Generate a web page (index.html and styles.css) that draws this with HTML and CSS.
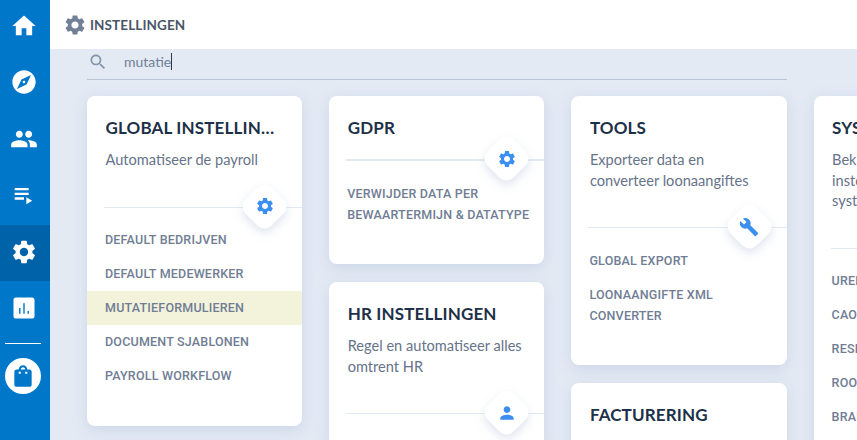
FILE: index.html
```html
<!DOCTYPE html>
<html lang="nl">
<head>
    <meta charset="UTF-8">
    <meta name="viewport" content="width=device-width, initial-scale=1.0">
    <title>Instellingen</title>
    <link rel="stylesheet" href="styles.css">
</head>
<body>
    <svg class="sprite" aria-hidden="true">
        <symbol id="i-home" viewBox="0 0 24 24"><path d="M10 20v-6h4v6h5v-8h3L12 3 2 12h3v8z"/></symbol>
        <symbol id="i-explore" viewBox="0 0 24 24"><path d="M12 10.9c-.61 0-1.1.49-1.1 1.1s.49 1.1 1.1 1.1c.61 0 1.1-.49 1.1-1.1s-.49-1.1-1.1-1.1zM12 2C6.48 2 2 6.48 2 12s4.48 10 10 10 10-4.48 10-10S17.52 2 12 2zm2.19 12.19L6 18l3.81-8.19L18 6l-3.81 8.19z"/></symbol>
        <symbol id="i-people" viewBox="0 0 24 24"><path d="M16 11c1.66 0 2.99-1.34 2.99-3S17.66 5 16 5c-1.66 0-3 1.34-3 3s1.34 3 3 3zm-8 0c1.66 0 2.99-1.34 2.99-3S9.66 5 8 5C6.34 5 5 6.34 5 8s1.34 3 3 3zm0 2c-2.33 0-7 1.17-7 3.5V19h14v-2.5c0-2.33-4.67-3.5-7-3.5zm8 0c-.29 0-.62.02-.97.05 1.16.84 1.97 1.97 1.97 3.45V19h6v-2.5c0-2.33-4.67-3.5-7-3.5z"/></symbol>
        <symbol id="i-playlist" viewBox="0 0 24 24"><path d="M4 10h12v2H4zm0-4h12v2H4zm0 8h8v2H4zm10 0v6l5-3z"/></symbol>
        <symbol id="i-settings" viewBox="0 0 24 24"><path d="M19.14 12.94c.04-.3.06-.61.06-.94 0-.32-.02-.64-.07-.94l2.03-1.58c.18-.14.23-.41.12-.61l-1.92-3.32c-.12-.22-.37-.29-.59-.22l-2.39.96c-.5-.38-1.03-.7-1.62-.94l-.36-2.54c-.04-.24-.24-.41-.48-.41h-3.84c-.24 0-.43.17-.47.41l-.36 2.54c-.59.24-1.13.57-1.62.94l-2.39-.96c-.22-.08-.47 0-.59.22L2.74 8.87c-.12.21-.08.47.12.61l2.03 1.58c-.05.3-.09.63-.09.94s.02.64.07.94l-2.03 1.58c-.18.14-.23.41-.12.61l1.92 3.32c.12.22.37.29.59.22l2.39-.96c.5.38 1.03.7 1.62.94l.36 2.54c.05.24.24.41.48.41h3.84c.24 0 .44-.17.47-.41l.36-2.54c.59-.24 1.13-.56 1.62-.94l2.39.96c.22.08.47 0 .59-.22l1.92-3.32c.12-.22.07-.47-.12-.61l-2.01-1.58zM12 15.6c-1.98 0-3.6-1.62-3.6-3.6s1.62-3.6 3.6-3.6 3.6 1.62 3.6 3.6-1.62 3.6-3.6 3.6z"/></symbol>
        <symbol id="i-chart" viewBox="0 0 24 24"><path fill-rule="evenodd" d="M19 3H5c-1.1 0-2 .9-2 2v14c0 1.1.9 2 2 2h14c1.1 0 2-.9 2-2V5c0-1.1-.9-2-2-2zM9 17H7.8v-5H9zm3.6 0h-1.2V8h1.2zm3.6 0H15v-2.4h1.2z"/></symbol>
        <symbol id="i-bag" viewBox="0 0 24 24"><path fill-rule="evenodd" d="M18 6h-2c0-2.21-1.79-4-4-4S8 3.79 8 6H6c-1.1 0-2 .9-2 2v12c0 1.1.9 2 2 2h12c1.1 0 2-.9 2-2V8c0-1.1-.9-2-2-2zm-6-2c1.1 0 2 .9 2 2h-4c0-1.1.9-2 2-2zM8 8h2v2H8zm6 0h2v2h-2z"/></symbol>
        <symbol id="i-wrench" viewBox="0 0 24 24"><path d="M22.7 19l-9.1-9.1c.9-2.3.4-5-1.5-6.9-2-2-5-2.4-7.4-1.3L9 6 6 9 1.6 4.7C.4 7.1.9 10.1 2.9 12.1c1.9 1.9 4.6 2.4 6.9 1.5l9.1 9.1c.4.4 1 .4 1.4 0l2.3-2.3c.5-.4.5-1.1.1-1.4z"/></symbol>
        <symbol id="i-person" viewBox="0 0 24 24"><path d="M12 12c2.21 0 4-1.79 4-4s-1.79-4-4-4-4 1.79-4 4 1.79 4 4 4zm0 2c-2.67 0-8 1.34-8 4v2h16v-2c0-2.66-5.33-4-8-4z"/></symbol>
        <symbol id="i-search" viewBox="0 0 24 24"><path d="M15.5 14h-.79l-.28-.27C15.41 12.59 16 11.11 16 9.5 16 5.91 13.09 3 9.5 3S3 5.91 3 9.5 5.91 16 9.5 16c1.61 0 3.09-.59 4.23-1.57l.27.28v.79l5 4.99L20.49 19l-4.99-5zm-6 0C7.01 14 5 11.99 5 9.5S7.01 5 9.5 5 14 7.01 14 9.5 11.99 14 9.5 14z"/></symbol>
    </svg>

    <nav class="sidebar">
        <a class="nav-item"><svg class="nav-icon"><use href="#i-home"/></svg></a>
        <a class="nav-item"><svg class="nav-icon"><use href="#i-explore"/></svg></a>
        <a class="nav-item"><svg class="nav-icon"><use href="#i-people"/></svg></a>
        <a class="nav-item"><svg class="nav-icon"><use href="#i-playlist"/></svg></a>
        <a class="nav-item active"><svg class="nav-icon"><use href="#i-settings"/></svg></a>
        <a class="nav-item"><svg class="nav-icon"><use href="#i-chart"/></svg></a>
        <div class="nav-divider"></div>
        <a class="nav-shop"><svg class="shop-icon"><use href="#i-bag"/></svg></a>
    </nav>

    <div class="page">
        <header class="header">
            <svg class="header-icon"><use href="#i-settings"/></svg>
            <span class="header-title">INSTELLINGEN</span>
        </header>

        <main class="content">
            <div class="search">
                <svg class="search-icon"><use href="#i-search"/></svg>
                <span class="search-text">mutatie</span><span class="caret"></span>
            </div>

            <div class="columns">
                <div class="column">
                    <section class="card">
                        <h3 class="card-title">GLOBAL INSTELLINGEN</h3>
                        <p class="card-description">Automatiseer de payroll</p>
                        <div class="card-divider">
                            <span class="diamond"><svg class="diamond-icon"><use href="#i-settings"/></svg></span>
                        </div>
                        <ul class="card-links">
                            <li>DEFAULT BEDRIJVEN</li>
                            <li>DEFAULT MEDEWERKER</li>
                            <li class="match">MUTATIEFORMULIEREN</li>
                            <li>DOCUMENT SJABLONEN</li>
                            <li>PAYROLL WORKFLOW</li>
                        </ul>
                    </section>
                </div>

                <div class="column">
                    <section class="card">
                        <h3 class="card-title">GDPR</h3>
                        <div class="card-divider thick">
                            <span class="diamond"><svg class="diamond-icon"><use href="#i-settings"/></svg></span>
                        </div>
                        <ul class="card-links">
                            <li>VERWIJDER DATA PER BEWAARTERMIJN &amp; DATATYPE</li>
                        </ul>
                    </section>
                    <section class="card">
                        <h3 class="card-title">HR INSTELLINGEN</h3>
                        <p class="card-description">Regel en automatiseer alles omtrent HR</p>
                        <div class="card-divider">
                            <span class="diamond"><svg class="diamond-icon"><use href="#i-person"/></svg></span>
                        </div>
                    </section>
                </div>

                <div class="column">
                    <section class="card">
                        <h3 class="card-title">TOOLS</h3>
                        <p class="card-description">Exporteer data en converteer loonaangiftes</p>
                        <div class="card-divider">
                            <span class="diamond"><svg class="diamond-icon"><use href="#i-wrench"/></svg></span>
                        </div>
                        <ul class="card-links">
                            <li>GLOBAL EXPORT</li>
                            <li>LOONAANGIFTE XML CONVERTER</li>
                        </ul>
                    </section>
                    <section class="card">
                        <h3 class="card-title">FACTURERING</h3>
                    </section>
                </div>

                <div class="column">
                    <section class="card">
                        <h3 class="card-title">SYSTEEM</h3>
                        <p class="card-description">Bekijk en wijzig alle instellingen van het hele systeem</p>
                        <div class="card-divider"></div>
                        <ul class="card-links">
                            <li>UREN</li>
                            <li>CAO</li>
                            <li>RESET</li>
                            <li>ROOSTERS</li>
                            <li>BRANCHES</li>
                        </ul>
                    </section>
                </div>
            </div>
        </main>
    </div>
</body>
</html>
```

FILE: styles.css
```css
* {
    margin: 0;
    padding: 0;
    box-sizing: border-box;
}

html, body {
    height: 100%;
    overflow: hidden;
}

body {
    font-family: 'Lato', 'Noto Sans', sans-serif;
    background: #e3eaf4;
    display: flex;
}

.sprite {
    display: none;
}

/* Sidebar */
.sidebar {
    width: 50px;
    flex-shrink: 0;
    background: #0077c8;
    display: flex;
    flex-direction: column;
    align-items: stretch;
    fill: #fff;
}

.nav-item {
    height: 56.3px;
    display: flex;
    align-items: center;
    justify-content: center;
    padding-right: 3px;
    padding-bottom: 4px;
}

.nav-item.active {
    background: #0062a8;
    padding-bottom: 2px;
}

.nav-icon {
    width: 28px;
    height: 28px;
}

.nav-divider {
    height: 1px;
    margin: 5px 9px 0 5px;
    background: #fff;
}

.nav-shop {
    width: 36px;
    height: 36px;
    margin: 14px 0 0 5px;
    border-radius: 50%;
    background: #fff;
    display: flex;
    align-items: center;
    justify-content: center;
}

.shop-icon {
    width: 26px;
    height: 26px;
    fill: #0077c8;
}

/* Header */
.page {
    flex: 1;
    min-width: 0;
    display: flex;
    flex-direction: column;
}

.header {
    height: 49px;
    flex-shrink: 0;
    background: #fff;
    display: flex;
    align-items: center;
    gap: 3px;
    padding-left: 13px;
}

.header-icon {
    width: 24px;
    height: 24px;
    fill: #718096;
}

.header-title {
    font-size: 13.5px;
    font-weight: 700;
    letter-spacing: 0.1px;
    color: #4a5568;
}

/* Search */
.content {
    flex: 1;
    min-height: 0;
    padding-left: 37px;
}

.search {
    width: 700px;
    height: 31px;
    display: flex;
    align-items: center;
    padding: 0 0 5px 0;
    border-bottom: 1px solid #b9c4d8;
}

.search-icon {
    width: 20px;
    height: 20px;
    margin-left: 1px;
    fill: #8496ac;
}

.search-text {
    margin-left: 16px;
    font-size: 14px;
    color: #718096;
}

.caret {
    width: 1px;
    height: 17px;
    background: #2d3748;
}

/* Cards */
.columns {
    display: flex;
    gap: 27px;
    margin-top: 16px;
}

.column {
    width: 215.2px;
    flex-shrink: 0;
    display: flex;
    flex-direction: column;
    gap: 18px;
}

.card {
    background: #fff;
    border-radius: 8px;
    box-shadow: 0 4px 14px rgba(160, 178, 205, 0.35);
    padding: 21px 0 33px;
}

.card-title {
    height: 22px;
    line-height: 22px;
    margin: 0 25px 0 18.5px;
    font-size: 17px;
    font-weight: 700;
    letter-spacing: 0.15px;
    color: #1c3048;
    white-space: nowrap;
    overflow: hidden;
    text-overflow: ellipsis;
}

.card-description {
    margin: 11px 15px 0 18.5px;
    font-size: 14.6px;
    line-height: 20.6px;
    color: #667389;
}

.card-divider {
    position: relative;
    height: 1px;
    margin: 36px 0 0 17px;
    background: #e3e9f4;
}

.card-divider.thick {
    height: 2px;
    margin-top: 20px;
}

.diamond {
    position: absolute;
    top: -23px;
    right: 15px;
    width: 45px;
    height: 45px;
    display: flex;
    align-items: center;
    justify-content: center;
}

.diamond::before {
    content: '';
    position: absolute;
    inset: 4px;
    border-radius: 10px;
    background: #fff;
    transform: rotate(45deg);
    box-shadow: 3px 3px 10px rgba(160, 178, 205, 0.35);
}

.diamond-icon {
    position: relative;
    width: 20px;
    height: 20px;
    fill: #3b8ff0;
}

.card-links {
    list-style: none;
    margin-top: 15px;
}

.card-links li {
    padding: 6.5px 10px 6.5px 18px;
    font-family: 'Roboto', 'Lato', sans-serif;
    font-size: 12.5px;
    font-weight: 500;
    line-height: 21px;
    letter-spacing: 0.2px;
    color: #707d94;
}

.card-links li.match {
    background: #f3f3dc;
}
```
